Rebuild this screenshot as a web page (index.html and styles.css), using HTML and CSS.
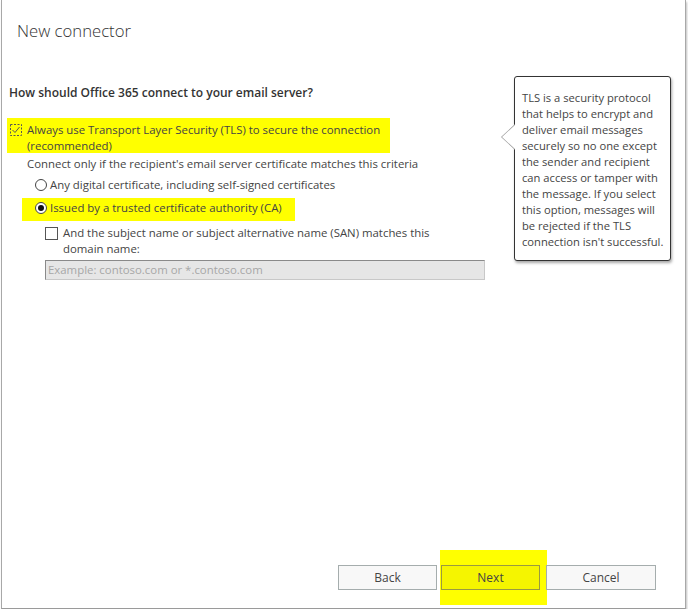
FILE: index.html
```html
<!DOCTYPE html>
<html lang="en">
<head>
    <meta charset="UTF-8">
    <title>New connector</title>
    <link rel="stylesheet" href="styles.css">
</head>
<body>
    <div class="window">
        <h1 class="title">New connector</h1>

        <div class="content">
            <h2 class="question">How should Office 365 connect to your email server?</h2>

            <div class="hl hl-tls">
                <svg class="check" width="12" height="12" viewBox="0 0 12 12">
                    <rect x="0.5" y="0.5" width="11" height="11" fill="none" stroke="#555" stroke-dasharray="2 1.5"/>
                    <path d="M2.5 6 L5 8.5 L9.5 3" fill="none" stroke="#555" stroke-width="1"/>
                </svg>
                <span>Always use Transport Layer Security (TLS) to secure the connection<br>(recommended)</span>
            </div>

            <div class="criteria">Connect only if the recipient's email server certificate matches this criteria</div>

            <div class="option">
                <span class="radio"></span>
                <span>Any digital certificate, including self-signed certificates</span>
            </div>

            <div class="hl hl-ca">
                <span class="radio checked"></span>
                <span>Issued by a trusted certificate authority (CA)</span>
            </div>

            <div class="option san">
                <span class="box"></span>
                <span>And the subject name or subject alternative name (SAN) matches this<br>domain name:</span>
            </div>

            <div class="domain">Example: contoso.com or *.contoso.com</div>

            <div class="tip">
                TLS is a security protocol that helps to encrypt and deliver email messages securely so no one except the sender and recipient can access or tamper with the message. If you select this option, messages will be rejected if the TLS connection isn't successful.
            </div>
        </div>

        <div class="footer">
            <button class="btn">Back</button>
            <div class="hl-next"><button class="btn next">Next</button></div>
            <button class="btn cancel">Cancel</button>
        </div>
    </div>
</body>
</html>
```

FILE: styles.css
```css
body {
    margin: 0;
    background: #fff;
    font-family: "Open Sans", "Noto Sans", sans-serif;
    color: #444;
    font-size: 11.4px;
}

.window {
    position: relative;
    margin-left: 1px;
    width: 683px;
    height: 608px;
    border-left: 1px solid #a8a8a8;
    border-right: 1px solid #a8a8a8;
    border-bottom: 1px solid #9a9a9a;
    box-shadow: 1px 2px 2px rgba(0, 0, 0, 0.25);
    display: flex;
    flex-direction: column;
}

.title {
    font-size: 16.7px;
    font-weight: 300;
    color: #333;
    margin: 20px 0 0 15px;
    line-height: 22px;
}

.content {
    position: relative;
    flex: 1;
    padding-left: 7px;
}

.question {
    font-size: 12px;
    font-weight: 600;
    color: #333;
    margin: 42px 0 0 0;
    line-height: 17px;
}

.hl {
    background: #ffff00;
    display: flex;
    align-items: flex-start;
    box-sizing: border-box;
    line-height: 16px;
}

.hl-tls {
    width: 383px;
    height: 35px;
    margin: 17px 0 0 -2px;
    padding: 4px 0 0 3px;
}

.check {
    margin: 2px 5px 0 0;
    flex: none;
}

.criteria {
    margin: 3px 0 0 18px;
    line-height: 16px;
}

.option {
    display: flex;
    align-items: flex-start;
    line-height: 16px;
    margin: 5px 0 0 26px;
}

.radio {
    width: 10px;
    height: 10px;
    border: 1px solid #444;
    border-radius: 50%;
    margin: 2px 3px 0 0;
    flex: none;
    position: relative;
    background: #fff;
}

.radio.checked::after {
    content: "";
    position: absolute;
    left: 2px;
    top: 2px;
    width: 6px;
    height: 6px;
    border-radius: 50%;
    background: #111;
}

.hl-ca {
    width: 273px;
    height: 23px;
    margin: 5px 0 0 13px;
    padding: 2px 0 0 13px;
}

.san {
    margin: 4px 0 0 36px;
}

.box {
    width: 11px;
    height: 11px;
    border: 1px solid #555;
    margin: 2px 5px 0 0;
    flex: none;
    background: #fff;
}

.domain {
    margin: 3px 0 0 36px;
    width: 436px;
    height: 18px;
    line-height: 18px;
    background: #e6e6e6;
    border: 1px solid #c8c8c8;
    border-top-color: #8a8a8a;
    border-left-color: #8a8a8a;
    color: #a6a6a6;
    padding-left: 2px;
}

.tip {
    position: absolute;
    left: 512px;
    top: 34px;
    width: 145px;
    height: 170px;
    padding: 13px 3px 0 7px;
    border: 1px solid #333;
    border-radius: 3px;
    background: #fff;
    box-shadow: 1px 2px 3px rgba(0, 0, 0, 0.35);
    font-size: 11.2px;
    line-height: 16px;
    color: #444;
}

.tip::before {
    content: "";
    position: absolute;
    left: -14px;
    top: 47px;
    width: 0;
    height: 0;
    border-top: 13px solid transparent;
    border-bottom: 13px solid transparent;
    border-right: 14px solid #999;
}

.tip::after {
    content: "";
    position: absolute;
    left: -13px;
    top: 48px;
    width: 0;
    height: 0;
    border-top: 12px solid transparent;
    border-bottom: 12px solid transparent;
    border-right: 13px solid #fff;
}

.footer {
    display: flex;
    align-items: center;
    padding: 0 0 0 336px;
    height: 62px;
}

.btn {
    font-family: "Open Sans", "Noto Sans", sans-serif;
    font-size: 12px;
    color: #444;
    background: #f8f8f8;
    border: 1px solid #a5adad;
    width: 99px;
    height: 25px;
    padding: 0;
    margin: 0;
}

.hl-next {
    background: #ffff00;
    width: 107px;
    height: 55px;
    margin-left: 3px;
    padding-left: 1px;
    box-sizing: border-box;
    display: flex;
    align-items: center;
}

.btn.next {
    background: #f5f500;
    border-color: #9a9a40;
}

.btn.cancel {
    width: 110px;
    margin-left: -1px;
}
```
